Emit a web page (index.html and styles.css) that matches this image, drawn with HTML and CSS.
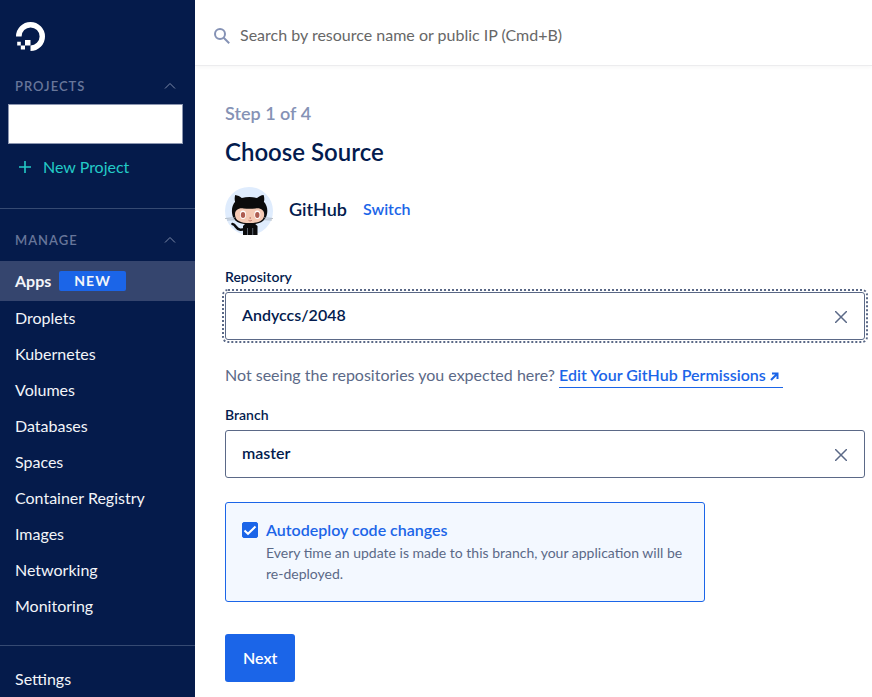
FILE: index.html
```html
<!DOCTYPE html>
<html lang="en">
<head>
<meta charset="utf-8">
<meta name="viewport" content="width=device-width, initial-scale=1">
<title>Choose Source</title>
<link rel="stylesheet" href="styles.css">
</head>
<body>
<div class="app">
  <aside class="sidebar">
    <a class="logo" href="#" aria-label="Home">
      <svg viewBox="0 0 29 29" width="29" height="29"><path d="M14.5 29v-5.600a9 9 0 1 0-8.900-8.900H0A14.500 14.500 0 1 1 14.500 29z" fill="#fff"/><path d="M9 18h5.500v5.400H9zM4.800 23.400H9v4.200H4.800zM1.200 19.800h3.600v3.600H1.200z" fill="#fff"/></svg>
    </a>
    <section>
      <button class="group" type="button">Projects
        <svg viewBox="0 0 12 8" width="12" height="8"><path d="M1 6.500 6 1.500l5 5"/></svg>
      </button>
      <div class="project"></div>
      <a class="new-project" href="#">
        <svg viewBox="0 0 12 12" width="12" height="12"><path d="M6 0v12M0 6h12" stroke-width="1.600"/></svg>
        New Project
      </a>
    </section>
    <nav class="manage">
      <button class="group" type="button">Manage
        <svg viewBox="0 0 12 8" width="12" height="8"><path d="M1 6.500 6 1.500l5 5"/></svg>
      </button>
      <a class="item active" href="#">Apps <span class="badge">NEW</span></a>
      <a class="item" href="#">Droplets</a>
      <a class="item" href="#">Kubernetes</a>
      <a class="item" href="#">Volumes</a>
      <a class="item" href="#">Databases</a>
      <a class="item" href="#">Spaces</a>
      <a class="item" href="#">Container Registry</a>
      <a class="item" href="#">Images</a>
      <a class="item" href="#">Networking</a>
      <a class="item" href="#">Monitoring</a>
    </nav>
    <nav class="account"><a class="item" href="#">Settings</a></nav>
  </aside>
  <div class="page">
    <header class="topbar">
      <svg viewBox="0 0 16 16" width="16" height="16"><circle cx="6" cy="6" r="5"/><path d="M9.700 9.700 15.200 15.200"/></svg>
      <input type="search" aria-label="Search" placeholder="Search by resource name or public IP (Cmd+B)">
    </header>
    <main class="content">
      <p class="step">Step 1 of 4</p>
      <h1>Choose Source</h1>
      <div class="source">
        <svg class="avatar" viewBox="0 0 48 48" width="48" height="48">
          <clipPath id="disc"><path d="M0 0h48v48H0z"/></clipPath>
          <circle cx="24" cy="24" r="24" fill="#dfecfd"/>
          <g clip-path="url(#disc)">
            <path d="M7.500 37c3.600.5 3.300 5.500 7.800 5.800 2 .2 4-.5 6-1" fill="none" stroke="#0b0b0c" stroke-width="2.600" stroke-linecap="round"/>
            <path d="M18 49V39l3-3h8l3.500 3v10z" fill="#0b0b0c"/>
            <path d="M10.200 8c2.500.2 5 1.800 6.600 3 4.800-1.200 10.500-1.200 15.200 0 1.800-1.300 4.200-2.800 6.600-3 .9 2.400.8 5 .3 6.800 2.900 3.200 3.900 7.200 3.200 11.800C41 34.500 34.500 37.500 24.500 37.500S8 34.500 7.100 26.600c-.6-4.600.3-8.600 3-11.800-.6-2-.6-4.500.1-6.800z" fill="#0b0b0c"/>
            <path d="M18.500 21.400c4 .5 8 .5 12 0 5.300-.7 8.700 1.800 8.700 6 0 6-5.200 8.700-14.500 8.700S10 33.400 10 27.400c0-4.200 3.400-6.700 8.500-6z" fill="#f4c9b4"/>
            <g fill="#fff"><ellipse cx="18" cy="27.800" rx="3" ry="4.200"/><ellipse cx="32.300" cy="27.800" rx="3" ry="4.200"/></g>
            <g fill="#ad5c51"><ellipse cx="18" cy="27.900" rx="2.200" ry="3"/><ellipse cx="32.300" cy="27.900" rx="2.200" ry="3"/><circle cx="25.200" cy="31" r=".7"/></g>
            <path d="M23.500 33.300c1 .8 2.300.8 3.300 0" fill="none" stroke="#ad5c51" stroke-width=".8"/>
            <path d="M22.500 41v8M27.700 41v8" stroke="#777f8b" stroke-width=".8"/>
            <path d="M0 31.500l10-.8M2 33l8-.3M48 31.500l-9-.8M47 33l-8-.3" stroke="#9ba5b0" stroke-width=".7"/>
          </g>
        </svg>
        <strong>GitHub</strong>
        <a href="#">Switch</a>
      </div>
      <form>
        <label class="label" for="repo">Repository</label>
        <div class="field focused">
          <input id="repo" type="text" value="Andyccs/2048">
          <button type="button" aria-label="Clear repository"><svg viewBox="0 0 12 12" width="12" height="12"><path d="M0 0l12 12M12 0 0 12" stroke-width="1.500"/></svg></button>
        </div>
        <p class="hint">Not seeing the repositories you expected here? <a href="#">Edit Your GitHub Permissions <svg viewBox="0 0 9 9" width="9" height="9"><path d="M2 1.500h5.500V7M7.500 1.500 1 8"/></svg></a></p>
        <label class="label" for="branch">Branch</label>
        <div class="field">
          <input id="branch" type="text" value="master">
          <button type="button" aria-label="Clear branch"><svg viewBox="0 0 12 12" width="12" height="12"><path d="M0 0l12 12M12 0 0 12" stroke-width="1.500"/></svg></button>
        </div>
        <div class="option">
          <span class="check">
            <input id="auto" type="checkbox" checked>
            <svg viewBox="0 0 16 16" width="16" height="16"><path d="M2.500 8.500l3.500 3.300L13.500 4.500"/></svg>
          </span>
          <div>
            <label for="auto">Autodeploy code changes</label>
            <p>Every time an update is made to this branch, your application will be re-deployed.</p>
          </div>
        </div>
        <button class="next" type="submit">Next</button>
      </form>
    </main>
  </div>
</div>
</body>
</html>
```

FILE: styles.css
```css
* { box-sizing: border-box; }
body {
  margin: 0;
  font: 16px/24px Lato, "Open Sans", sans-serif;
  color: #031b4e;
  background: #fff;
}
h1, p { margin: 0; }
a { color: #1b65e8; text-decoration: none; }
button, input { font: inherit; color: inherit; }
button { border: 0; padding: 0; background: none; cursor: pointer; }
svg { flex: none; fill: none; }

.app { display: grid; grid-template-columns: 195px minmax(0, 1fr); min-height: 100vh; }

.sidebar { height: 100vh; overflow: hidden; background: #051b4b; color: #f3f5f9; }
.logo { display: flex; padding: 22px 16px 0; }
.group {
  display: flex;
  align-items: center;
  justify-content: space-between;
  width: 100%;
  height: 42px;
  padding: 0 19px 0 15px;
  color: #68769a;
  font-size: 13px;
  font-weight: 600;
  letter-spacing: 1px;
  text-transform: uppercase;
}
.group svg { stroke: #7c89a8; }
section { padding: 16px 0 22px; }
section .group { height: 37px; }
.project { height: 40px; margin: 0 12px 0 8px; background: #fff; border: 1px solid #8c96b0; }
.new-project { display: flex; align-items: center; gap: 12px; padding: 11px 19px 7px; color: #23cbc7; }
.new-project svg { stroke: #23cbc7; }
.manage { padding: 10px 0 20px; border-top: 1px solid #364a72; }
.item { display: flex; align-items: center; height: 36px; padding: 0 15px 2px; color: #f3f5f9; }
.active { height: 40px; padding-bottom: 0; gap: 8px; background: #35456e; font-weight: 700; }
.badge {
  padding: 0 15px;
  border-radius: 2px;
  background: #1b65e8;
  font-size: 14px;
  line-height: 20px;
  letter-spacing: 1px;
}
.account { padding-top: 16px; border-top: 1px solid #364a72; }

.topbar {
  display: flex;
  align-items: center;
  gap: 10px;
  height: 66px;
  padding: 6px 19px 0;
  border-bottom: 1px solid #ececee;
  box-shadow: 0 2px 4px rgba(0, 0, 0, .03);
}
.topbar svg { stroke: #8592b5; stroke-width: 2; }
.topbar input { flex: 1; min-width: 0; padding: 0 0 2px; border: 0; outline: 0; background: none; }
.topbar input::placeholder { color: #676767; opacity: 1; }

.content { max-width: 677px; padding: 35px 7px 15px 30px; }
.step { color: #8592b5; font-size: 18px; font-weight: 600; }
h1 { margin: 11px 0 19px; font-size: 24px; line-height: 32px; font-weight: 600; }
.source { display: flex; align-items: center; gap: 16px; margin-bottom: 30px; font-weight: 600; }
.source strong, .source a { padding-bottom: 4px; }
.source strong { font-size: 18px; font-weight: 600; }
.label { display: block; margin-bottom: 3px; font-size: 14px; font-weight: 600; }
.field { display: flex; height: 48px; border: 1px solid #5b6987; border-radius: 3px; }
.focused { outline: 2px dotted #5b6987; outline-offset: 1px; }
.field input { flex: 1; min-width: 0; padding: 0 16px 2px; border: 0; outline: 0; background: none; font-weight: 600; }
.field button { display: grid; place-items: center; width: 47px; padding-top: 2px; }
.field svg { stroke: #5b6987; }
.hint { margin: 23px 0 15px; color: #5b6987; }
.hint a { display: inline-block; padding-right: 4px; border-bottom: 1px solid #1b65e8; font-weight: 600; }
.hint svg { stroke: #1b65e8; stroke-width: 2; }
.option {
  display: flex;
  gap: 8px;
  max-width: 480px;
  min-height: 100px;
  margin: 24px 0 32px;
  padding: 15px 16px;
  border: 1px solid #1b65e8;
  border-radius: 3px;
  background: #f3f8ff;
}
.option label { color: #1b65e8; font-weight: 600; }
.option p { color: #5b6987; font-size: 14px; line-height: 21px; }
.check { display: grid; flex: none; width: 16px; height: 24px; align-items: center; }
.check > * { grid-area: 1 / 1; }
.check input { appearance: none; width: 16px; height: 16px; margin: 0; border: 1px solid #1b65e8; border-radius: 2px; }
.check input:checked { background: #1b65e8; }
.check svg { stroke: #fff; stroke-width: 2; pointer-events: none; }
.next { height: 48px; padding: 0 18px; border-radius: 3px; background: #1b65e8; color: #fff; font-weight: 600; }
```
